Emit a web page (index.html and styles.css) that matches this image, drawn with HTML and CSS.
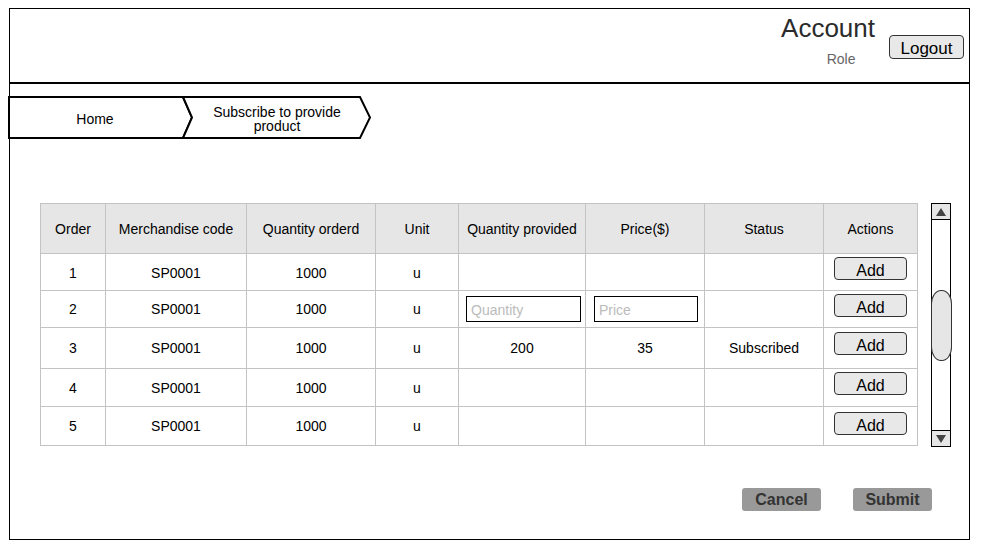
FILE: index.html
```html
<!DOCTYPE html>
<html>
<head>
<meta charset="utf-8">
<link rel="stylesheet" href="styles.css">
</head>
<body>
<div class="frame">
  <header class="header">
    <div class="account">
      <div class="account-name">Account</div>
      <div class="account-role">Role</div>
    </div>
    <button class="logout">Logout</button>
  </header>

  <nav class="crumbs">
    <svg class="crumbs-bg" width="364" height="43" viewBox="0 0 364 43">
      <path d="M1 1 H175 L184 21.5 L175 42 H1 Z" fill="#fff" stroke="#000" stroke-width="2"/>
      <path d="M175 1 H352 L362 21.5 L352 42 H175 L184 21.5 Z" fill="#fff" stroke="#000" stroke-width="2" stroke-linejoin="miter"/>
    </svg>
    <span class="crumb crumb-home">Home</span>
    <span class="crumb crumb-sub">Subscribe to provide<br>product</span>
  </nav>

  <div class="table-area">
    <table class="grid">
      <colgroup>
        <col style="width:65px"><col style="width:141px"><col style="width:129px"><col style="width:83px">
        <col style="width:127px"><col style="width:119px"><col style="width:119px"><col style="width:94px">
      </colgroup>
      <thead>
        <tr>
          <th>Order</th><th>Merchandise code</th><th>Quantity orderd</th><th>Unit</th>
          <th>Quantity provided</th><th>Price($)</th><th>Status</th><th>Actions</th>
        </tr>
      </thead>
      <tbody>
        <tr class="r1">
          <td>1</td><td>SP0001</td><td>1000</td><td>u</td><td></td><td></td><td></td>
          <td class="act"><button class="add">Add</button></td>
        </tr>
        <tr class="r2">
          <td>2</td><td>SP0001</td><td>1000</td><td>u</td>
          <td class="inp"><input class="field qty" placeholder="Quantity"></td>
          <td class="inp"><input class="field price" placeholder="Price"></td>
          <td></td>
          <td class="act"><button class="add">Add</button></td>
        </tr>
        <tr class="r3">
          <td>3</td><td>SP0001</td><td>1000</td><td>u</td><td>200</td><td>35</td><td>Subscribed</td>
          <td class="act"><button class="add">Add</button></td>
        </tr>
        <tr class="r4">
          <td>4</td><td>SP0001</td><td>1000</td><td>u</td><td></td><td></td><td></td>
          <td class="act"><button class="add">Add</button></td>
        </tr>
        <tr class="r5">
          <td>5</td><td>SP0001</td><td>1000</td><td>u</td><td></td><td></td><td></td>
          <td class="act act5"><button class="add">Add</button></td>
        </tr>
      </tbody>
    </table>

    <div class="scrollbar">
      <div class="sb-btn sb-up"><svg width="10" height="8" viewBox="0 0 10 8"><path d="M5 0 L10 8 H0 Z" fill="#444"/></svg></div>
      <div class="sb-track">
        <div class="sb-thumb"></div>
      </div>
      <div class="sb-btn sb-down"><svg width="10" height="8" viewBox="0 0 10 8"><path d="M0 0 H10 L5 8 Z" fill="#444"/></svg></div>
    </div>
  </div>

  <div class="footer">
    <button class="btn-gray">Cancel</button>
    <button class="btn-gray">Submit</button>
  </div>
</div>
</body>
</html>
```
FILE: styles.css
```css
* { box-sizing: border-box; }
html, body { margin: 0; padding: 0; background: #fff; }
body {
  font-family: "Liberation Sans", Arial, sans-serif;
  color: #000;
  width: 981px;
  height: 547px;
  overflow: hidden;
}

.frame {
  margin: 8px 0 0 9px;
  width: 961px;
  height: 532px;
  border: 1px solid #000;
  display: flex;
  flex-direction: column;
}

.header {
  height: 75px;
  border-bottom: 2px solid #000;
  display: flex;
  justify-content: flex-end;
  align-items: flex-start;
  padding-right: 5px;
  flex-shrink: 0;
}
.account {
  display: flex;
  flex-direction: column;
  align-items: center;
  margin-right: 14px;
}
.account-name {
  font-size: 26px;
  line-height: 30px;
  margin-top: 4px;
  color: #2b2b2b;
}
.account-role {
  font-size: 14px;
  line-height: 18px;
  color: #666;
  margin-top: 7px;
  margin-left: 26px;
}
.logout {
  margin-top: 26px;
  width: 75px;
  height: 24px;
  font-family: "Liberation Sans", Arial, sans-serif;
  font-size: 17px;
  line-height: 20px;
  padding: 3px 0 0;
  color: #000;
  background: #e8e8e8;
  border: 1px solid #333;
  border-radius: 4px;
}

.crumbs {
  position: relative;
  width: 364px;
  height: 43px;
  margin: 12px 0 0 -2px;
  display: flex;
  flex-shrink: 0;
}
.crumbs-bg { position: absolute; left: 0; top: 0; }
.crumb {
  position: relative;
  display: flex;
  align-items: center;
  justify-content: center;
  text-align: center;
  font-size: 14px;
  line-height: 14px;
  color: #000;
}
.crumb-home { width: 174px; padding-top: 3px; }
.crumb-sub { width: 188px; padding-left: 2px; padding-top: 3px; }

.table-area {
  display: flex;
  align-items: flex-start;
  margin: 64px 0 0 30px;
  flex-shrink: 0;
}

.grid {
  border-collapse: collapse;
  table-layout: fixed;
  width: 878px;
  font-size: 14px;
}
.grid th, .grid td {
  border: 1px solid #c3c3c3;
  text-align: center;
  vertical-align: middle;
  padding: 0;
  color: #000;
}
.grid th {
  background: #e6e6e6;
  font-weight: normal;
  height: 50px;
}
.r1 td { height: 37px; padding-top: 2px; }
.r2 td { height: 37px; }
.r3 td { height: 41px; }
.r4 td { height: 38px; }
.r5 td { height: 39px; }
.grid td.act {
  vertical-align: top;
  padding-top: 3px;
}
.grid td.act5 { padding-top: 5px; }
.r3 td.act { padding-top: 4px; }
.grid td.inp {
  vertical-align: middle;
  text-align: left;
  padding-left: 7px;
}
.field {
  display: block;
  height: 26px;
  border: 1px solid #000;
  border-radius: 0;
  font-family: "Liberation Sans", Arial, sans-serif;
  font-size: 14px;
  padding: 2px 4px 0;
  outline: none;
}
.field.qty { width: 115px; }
.field.price { width: 104px; margin-left: 1px; }
.field::placeholder { color: #bbb; }

.add {
  width: 73px;
  height: 23px;
  font-family: "Liberation Sans", Arial, sans-serif;
  font-size: 16px;
  line-height: 18px;
  padding: 4px 0 0;
  color: #000;
  background: #e8e8e8;
  border: 1px solid #333;
  border-radius: 4px;
}

.scrollbar {
  margin-left: 13px;
  width: 20px;
  height: 244px;
  border: 1.5px solid #000;
  display: flex;
  flex-direction: column;
}
.sb-btn {
  height: 16px;
  background: #e6e6e6;
  display: flex;
  align-items: center;
  justify-content: center;
  flex-shrink: 0;
}
.sb-up { border-bottom: 1px solid #000; }
.sb-down { border-top: 1px solid #000; }
.sb-track {
  flex: 1;
  padding-top: 70px;
}
.sb-thumb {
  margin: 0 -1.5px;
  height: 71px;
  background: #e6e6e6;
  border: 1px solid #333;
  border-radius: 10px / 14px;
}

.footer {
  display: flex;
  justify-content: flex-end;
  gap: 32px;
  margin-top: 41px;
  padding-right: 37px;
}
.btn-gray {
  width: 79px;
  height: 23px;
  background: #999;
  border: none;
  border-radius: 3px;
  font-family: "Liberation Sans", Arial, sans-serif;
  font-weight: bold;
  font-size: 16px;
  color: #333;
  padding: 0;
}
```
